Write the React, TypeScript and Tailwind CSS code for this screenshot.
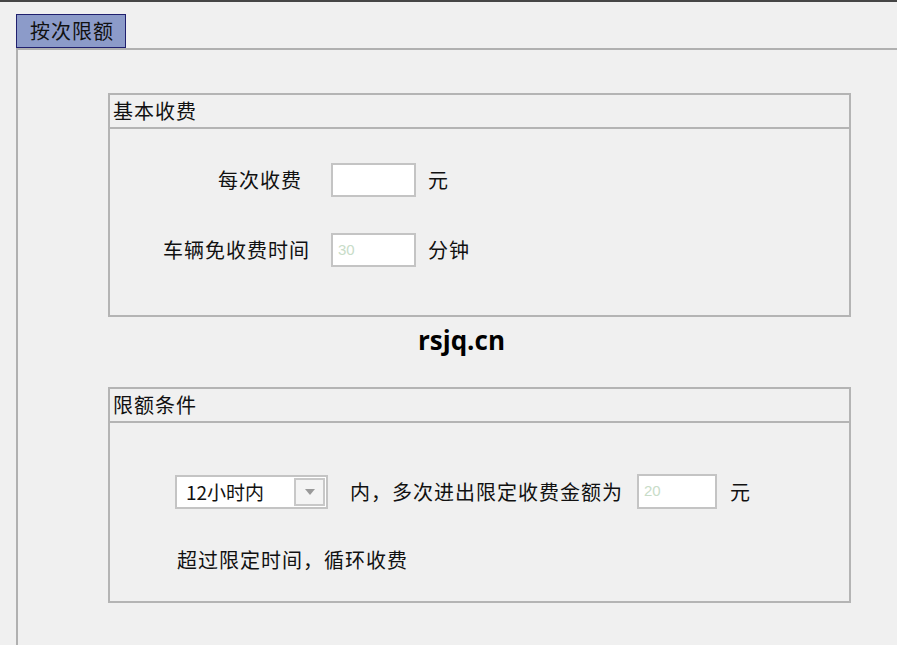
export default function App() {
  const cjk = { fontFamily: '"Noto Sans CJK SC", "Liberation Sans", sans-serif' }

  return (
    <div className="w-[897px] h-[645px] overflow-hidden bg-[#f0f0f0] text-[#111]" style={cjk}>
      <div className="h-[2px] bg-[#464646]" />
      <div className="pl-[16px] pt-[12px]">
        <div className="w-[110px] h-[34px] border border-[#20206e] bg-[#8c9bc9] pl-[13px] flex items-center text-[20px] leading-none tracking-[1px]">
          按次限额
        </div>
        <div className="border-l-2 border-t-2 border-[#b0b0b0] h-[600px]">
          <div className="ml-[90px] mt-[43px] w-[743px]">
            {/* 基本收费 */}
            <div className="h-[224px] border-2 border-[#b4b4b4]">
              <div className="h-[34px] border-b-2 border-[#b4b4b4] pl-[3px] flex items-center text-[20px] leading-none tracking-[1px]">
                基本收费
              </div>
              <div className="pt-[34px] flex flex-col gap-[36px]">
                <div className="flex items-center">
                  <div className="ml-[108px] w-[85px] text-[20px] leading-none tracking-[1px] whitespace-nowrap">每次收费</div>
                  <input className="ml-[28px] w-[85px] h-[34px] border-2 border-[#c4c4c4] bg-white outline-none" />
                  <span className="ml-[12px] text-[20px] leading-none">元</span>
                </div>
                <div className="flex items-center">
                  <div className="ml-[53px] w-[147px] text-[20px] leading-none tracking-[1px] whitespace-nowrap">车辆免收费时间</div>
                  <div className="ml-[21px] w-[85px] h-[34px] border-2 border-[#c4c4c4] bg-white pl-[5px] flex items-center text-[15px] text-[#c8dcc8]" style={{ fontFamily: '"Liberation Sans", sans-serif' }}>30</div>
                  <span className="ml-[12px] text-[20px] leading-none tracking-[1px]">分钟</span>
                </div>
              </div>
            </div>

            <div className="h-[70px] pt-[10px] pl-[310px]">
              <span className="block text-[26px] leading-[26px] font-bold text-black" style={{ fontFamily: '"Open Sans", sans-serif' }}>rsjq.cn</span>
            </div>

            {/* 限额条件 */}
            <div className="h-[216px] border-2 border-[#b4b4b4]">
              <div className="h-[34px] border-b-2 border-[#b4b4b4] pl-[3px] flex items-center text-[20px] leading-none tracking-[1px]">
                限额条件
              </div>
              <div className="pt-[51px] pl-[65px]">
                <div className="flex items-center">
                  <div className="w-[153px] h-[34px] border-2 border-[#c4c4c4] bg-white flex items-center">
                    <span className="flex-1 pl-[9px] text-[19px] leading-none">12小时内</span>
                    <div className="w-[31px] h-[28px] mr-[1px] border-2 border-[#c8c8c8] bg-[#f4f4f4] flex items-center justify-center">
                      <div className="w-0 h-0 border-l-[5px] border-r-[5px] border-t-[6px] border-l-transparent border-r-transparent border-t-[#9a9a9a]" />
                    </div>
                  </div>
                  <span className="ml-[22px] text-[20px] leading-none tracking-[1px]">内，多次进出限定收费金额为</span>
                  <div className="ml-[14px] w-[80px] h-[35px] border-2 border-[#c4c4c4] bg-white pl-[5px] flex items-center text-[15px] text-[#c8dcc8]" style={{ fontFamily: '"Liberation Sans", sans-serif' }}>20</div>
                  <span className="ml-[13px] text-[20px] leading-none">元</span>
                </div>
                <div className="mt-[41px] pl-[2px] text-[20px] leading-none tracking-[1px]">超过限定时间，循环收费</div>
              </div>
            </div>
          </div>
        </div>
      </div>
    </div>
  )
}
